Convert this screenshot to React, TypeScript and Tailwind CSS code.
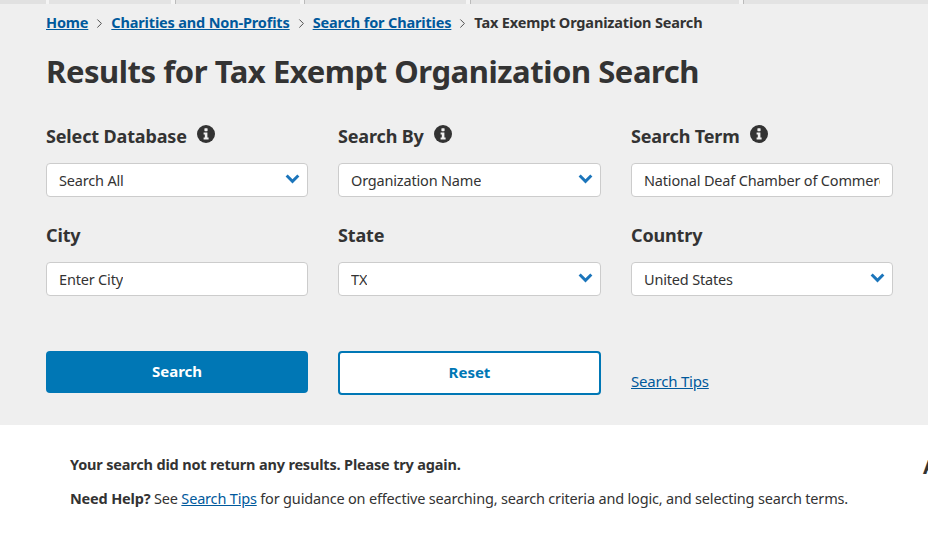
import React from 'react';
import { ChevronRight } from 'lucide-react';

const font = { fontFamily: '"Noto Sans", sans-serif' };

const InfoDot: React.FC = () => (
  <svg width="18" height="18" viewBox="0 0 18 18" className="ml-[10px] mb-[4px] shrink-0">
    <circle cx="9" cy="9" r="9" fill="#333333" />
    <rect x="7.4" y="3.2" width="3.2" height="3" rx="0.6" fill="#f0f0f0" />
    <path d="M6.6 7.6h3.8v5h1.2v1.8H6.6v-1.8h1.2v-3.2H6.6z" fill="#f0f0f0" />
  </svg>
);

const Arrow: React.FC = () => (
  <svg width="15" height="10" viewBox="0 0 15 10" className="shrink-0 mb-[3px]">
    <path d="M0.6 2.6 2.7 0.5 7.5 5.2 12.3 0.5 14.4 2.6 7.5 9.4z" fill="#1b75bb" />
  </svg>
);

const Crumb: React.FC = () => <ChevronRight size={15} strokeWidth={1.5} className="mx-[4px] text-[#444444] shrink-0" />;

const Field: React.FC<{ label: string; info?: boolean; select?: boolean; value: string }> = ({
  label,
  info,
  select,
  value,
}) => (
  <div>
    <div className="flex items-center h-[28px] text-[18px] font-bold text-[#333333] tracking-[-0.15px]">
      {label}
      {info && <InfoDot />}
    </div>
    <div className="mt-[13px] h-[34px] bg-white border border-[#cccccc] rounded-[4px] flex items-center justify-between pl-[12px] pr-[7px] text-[14.5px] text-[#333333] tracking-[-0.18px]">
      <span className={`overflow-hidden whitespace-nowrap pt-[2px] ${select ? '' : 'mr-[5px]'}`}>{value}</span>
      {select && <Arrow />}
    </div>
  </div>
);

const App: React.FC = () => {
  return (
    <div className="w-[928px] h-[535px] overflow-hidden bg-white relative" style={font}>
      <div className="h-[425px] bg-[#efefef]">
        <div className="flex h-[4px] bg-[#f4f4f4]">
          <div className="w-[46px] bg-[#e1e1e1]" />
          <div className="ml-[3px] w-[122px] bg-[#e3e3e3]" />
          <div className="ml-[4px] w-[125px] bg-[#e3e3e3] border-l border-[#bbbbbb]" />
          <div className="ml-[4px] w-[162px] bg-[#e3e3e3] border-l border-[#bbbbbb]" />
          <div className="ml-[4px] w-[269px] bg-[#e3e3e3] border-l border-[#bbbbbb]" />
          <div className="ml-[4px] flex-1 bg-[#e3e3e3] border-l border-[#bbbbbb]" />
        </div>
        <div className="px-[46px] pt-[9px]">
          <nav className="flex items-center h-[20px] text-[14.5px] font-bold tracking-[-0.16px] text-[#333333]">
            <a className="underline text-[#00599c]">Home</a>
            <Crumb />
            <a className="underline text-[#00599c]">Charities and Non-Profits</a>
            <Crumb />
            <a className="underline text-[#00599c]">Search for Charities</a>
            <Crumb />
            <span>Tax Exempt Organization Search</span>
          </nav>
          <h1 className="mt-[14px] text-[31px] leading-[48px] font-bold text-[#333333] tracking-[-0.45px]">
            Results for Tax Exempt Organization Search
          </h1>
          <div className="mt-[27px] grid w-[847px] grid-cols-[262px_263px_262px] gap-x-[30px] gap-y-[24px]">
            <Field label="Select Database" info select value="Search All" />
            <Field label="Search By" info select value="Organization Name" />
            <Field label="Search Term" info value="National Deaf Chamber of Commerce" />
            <Field label="City" value="Enter City" />
            <Field label="State" select value="TX" />
            <Field label="Country" select value="United States" />
          </div>
          <div className="mt-[55px] grid w-[847px] grid-cols-[262px_263px_262px] gap-x-[30px] items-start">
            <button className="h-[42px] pb-[2px] bg-[#0077b5] rounded-[4px] text-white font-bold text-[15px]">Search</button>
            <button className="h-[44px] pb-[2px] bg-white border-2 border-[#0077b5] rounded-[4px] text-[#0077b5] font-bold text-[15px]">
              Reset
            </button>
            <a className="mt-[19px] underline text-[#00599c] text-[15px] tracking-[-0.2px]">Search Tips</a>
          </div>
        </div>
      </div>
      <div className="pl-[70px] pt-[29px] text-[14.5px] text-[#333333] tracking-[-0.18px]">
        <p className="font-bold leading-[20px]">Your search did not return any results. Please try again.</p>
        <p className="mt-[14px] leading-[20px]">
          <b>Need Help?</b> See <a className="underline text-[#00599c]">Search Tips</a> for guidance on effective
          searching, search criteria and logic, and selecting search terms.
        </p>
      </div>
      <span className="absolute left-[923px] top-[452px] text-[20px] font-bold text-[#333333]">A</span>
    </div>
  );
};

export default App;
